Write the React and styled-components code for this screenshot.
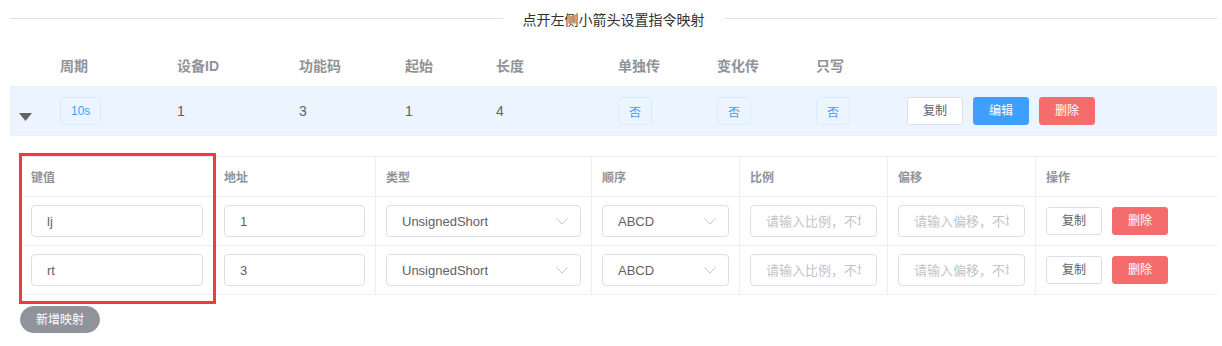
import React from 'react';
import styled, { createGlobalStyle } from 'styled-components';

const GlobalStyle = createGlobalStyle`
  body {
    margin: 0;
    background: #fff;
    font-family: "Liberation Sans", "Noto Sans CJK SC", sans-serif;
    color: #606266;
  }
  * { box-sizing: border-box; }
`;

const Page = styled.div`
  width: 1222px;
  padding: 0 5px 0 10px;
`;

const Divider = styled.div`
  display: flex;
  align-items: center;
  height: 21px;
  margin-top: 8px;
  &::before, &::after {
    content: '';
    flex: 1;
    height: 1px;
    background: #dcdfe6;
  }
`;

const DividerText = styled.span`
  padding: 0 20px;
  font-size: 14px;
  color: #303133;
`;

const topCols = '40px 117px 122px 106px 91px 122px 99px 99px 91px 1fr';

const TopHead = styled.div`
  display: grid;
  grid-template-columns: ${topCols};
  margin-top: 11px;
  height: 47px;
  padding-top: 3px;
  border-bottom: 1px solid #ebeef5;
  align-items: center;
`;

const TopHeadCell = styled.div`
  padding-left: 10px;
  font-size: 14px;
  font-weight: bold;
  color: #909399;
`;

const TopRow = styled.div`
  display: grid;
  grid-template-columns: ${topCols};
  height: 49px;
  align-items: center;
  background: #ecf5ff;
  border-bottom: 1px solid #ebeef5;
`;

const TopCell = styled.div`
  display: flex;
  align-items: center;
  gap: 10px;
  padding-left: 10px;
  font-size: 14px;
  color: #606266;
`;

const ExpandCell = styled.div`
  padding: 12px 0 0 9px;
  display: flex;
  align-items: center;
`;

const Tag = styled.span`
  display: inline-flex;
  align-items: center;
  height: 28px;
  padding: 0 10px;
  font-size: 12px;
  color: #409eff;
  background: #ecf5ff;
  border: 1px solid #d9ecff;
  border-radius: 4px;
`;

const variants = {
  default: { bg: '#fff', border: '#dcdfe6', color: '#606266' },
  primary: { bg: '#409eff', border: '#409eff', color: '#fff' },
  danger: { bg: '#f56c6c', border: '#f56c6c', color: '#fff' },
  info: { bg: '#909399', border: '#909399', color: '#fff' },
};

const Button = styled.button`
  height: 28px;
  padding: 0 15px;
  font-family: inherit;
  font-size: 12px;
  line-height: 1;
  color: ${(p) => variants[p.$variant || 'default'].color};
  background: ${(p) => variants[p.$variant || 'default'].bg};
  border: 1px solid ${(p) => variants[p.$variant || 'default'].border};
  border-radius: ${(p) => (p.$round ? '14px' : '3px')};
  cursor: pointer;
`;

const Expanded = styled.div`
  padding: 20px 0 0 10px;
`;

const NestedWrap = styled.div`
  position: relative;
`;

const Highlight = styled.div`
  position: absolute;
  left: -1px;
  top: -3px;
  width: 197px;
  height: 151px;
  border: 3px solid #f23a3a;
  pointer-events: none;
`;

const nestedCols = '194px 162px 216px 148px 148px 148px 181px';

const NestedTable = styled.div`
  border-top: 1px solid #ebeef5;
`;

const NestedRow = styled.div`
  display: grid;
  grid-template-columns: ${nestedCols};
  height: ${(p) => (p.$head ? '40px' : '49px')};
`;

const NestedCell = styled.div`
  display: flex;
  align-items: center;
  gap: 10px;
  padding: 0 10px;
  border-bottom: 1px solid #ebeef5;
  border-right: 1px solid #ebeef5;
  &:first-child { border-left: 1px solid #ebeef5; }
  &:last-child { border-right: none; }
`;

const HeadText = styled.span`
  font-size: 12px;
  font-weight: bold;
  color: #909399;
`;

const Input = styled.input`
  width: 100%;
  height: 32px;
  padding: 0 15px;
  font-family: inherit;
  font-size: 13px;
  color: #606266;
  border: 1px solid #dcdfe6;
  border-radius: 4px;
  outline: none;
  &::placeholder { color: #c0c4cc; }
`;

const Select = styled.div`
  width: 100%;
  height: 32px;
  padding: 0 12px 0 15px;
  display: flex;
  align-items: center;
  justify-content: space-between;
  font-size: 13px;
  color: #606266;
  border: 1px solid #dcdfe6;
  border-radius: 4px;
`;

const AddButton = styled(Button)`
  margin-top: 11px;
  height: 27px;
`;

const Caret = () => (
  <svg width="13" height="8" viewBox="0 0 13 8">
    <path d="M0 0 H13 L6.5 8 Z" fill="#606266" />
  </svg>
);

const Chevron = () => (
  <svg width="12" height="7" viewBox="0 0 12 7">
    <path d="M0.5 0.5 L6 6 L11.5 0.5" fill="none" stroke="#c0c4cc" strokeWidth="1" />
  </svg>
);

const topHeads = ['周期', '设备ID', '功能码', '起始', '长度', '单独传', '变化传', '只写'];

const mappings = [
  { key: 'lj', addr: '1', type: 'UnsignedShort', order: 'ABCD' },
  { key: 'rt', addr: '3', type: 'UnsignedShort', order: 'ABCD' },
];

export default function App() {
  return (
    <>
      <GlobalStyle />
      <Page>
        <Divider>
          <DividerText>点开左侧小箭头设置指令映射</DividerText>
        </Divider>

        <TopHead>
          <div />
          {topHeads.map((h) => (
            <TopHeadCell key={h}>{h}</TopHeadCell>
          ))}
          <div />
        </TopHead>

        <TopRow>
          <ExpandCell>
            <Caret />
          </ExpandCell>
          <TopCell><Tag>10s</Tag></TopCell>
          <TopCell>1</TopCell>
          <TopCell>3</TopCell>
          <TopCell>1</TopCell>
          <TopCell>4</TopCell>
          <TopCell><Tag>否</Tag></TopCell>
          <TopCell><Tag>否</Tag></TopCell>
          <TopCell><Tag>否</Tag></TopCell>
          <TopCell>
            <Button>复制</Button>
            <Button $variant="primary">编辑</Button>
            <Button $variant="danger">删除</Button>
          </TopCell>
        </TopRow>

        <Expanded>
          <NestedWrap>
            <NestedTable>
              <NestedRow $head>
                {['键值', '地址', '类型', '顺序', '比例', '偏移', '操作'].map((h) => (
                  <NestedCell key={h}><HeadText>{h}</HeadText></NestedCell>
                ))}
              </NestedRow>
              {mappings.map((m) => (
                <NestedRow key={m.key}>
                  <NestedCell><Input defaultValue={m.key} /></NestedCell>
                  <NestedCell><Input defaultValue={m.addr} /></NestedCell>
                  <NestedCell>
                    <Select>{m.type}<Chevron /></Select>
                  </NestedCell>
                  <NestedCell>
                    <Select>{m.order}<Chevron /></Select>
                  </NestedCell>
                  <NestedCell><Input placeholder="请输入比例，不填默认为1" /></NestedCell>
                  <NestedCell><Input placeholder="请输入偏移，不填默认为0" /></NestedCell>
                  <NestedCell>
                    <Button>复制</Button>
                    <Button $variant="danger">删除</Button>
                  </NestedCell>
                </NestedRow>
              ))}
            </NestedTable>
            <Highlight />
          </NestedWrap>
          <AddButton $variant="info" $round>新增映射</AddButton>
        </Expanded>
      </Page>
    </>
  );
}
